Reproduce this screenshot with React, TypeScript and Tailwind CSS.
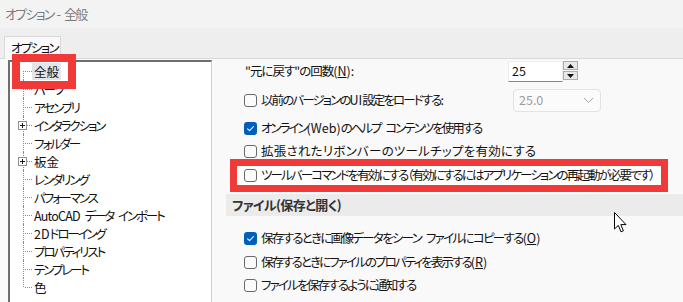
import React from "react";

const L = ({ children }: { children: React.ReactNode }) => <span className="tracking-normal">{children}</span>;
const S = () => <span className="tracking-[2px]"> </span>;

const Check = ({ checked }: { checked?: boolean }) =>
  checked ? (
    <span className="flex h-[13px] w-[13px] shrink-0 items-center justify-center rounded-[3px] bg-[#005fb8]">
      <svg width="9" height="9" viewBox="0 0 9 9">
        <path d="M1.6 4.8 L3.6 6.7 L7.5 2.5" fill="none" stroke="#fff" strokeWidth="1.1" strokeLinecap="round" strokeLinejoin="round" />
      </svg>
    </span>
  ) : (
    <span className="h-[13px] w-[13px] shrink-0 rounded-[3px] border border-[#6a6a6a] bg-[#fbfbfb]" />
  );

const items: { key: string; label: React.ReactNode; selected?: boolean; plus?: boolean; kanji?: boolean }[] = [
  { key: "a", label: "全般", selected: true, kanji: true },
  { key: "b", label: "パーツ" },
  { key: "c", label: "アセンブリ" },
  { key: "d", label: "インタラクション", plus: true },
  { key: "e", label: "フォルダー" },
  { key: "f", label: "板金", plus: true, kanji: true },
  { key: "g", label: "レンダリング" },
  { key: "h", label: "パフォーマンス" },
  {
    key: "i",
    label: (
      <>
        <span className="tracking-[-0.8px]">AutoCAD</span>
        <S />
        データ
        <S />
        インポート
      </>
    ),
  },
  {
    key: "j",
    label: (
      <>
        <L>2D</L>ドローイング
      </>
    ),
  },
  { key: "k", label: "プロパティリスト" },
  { key: "l", label: "テンプレート" },
  { key: "m", label: "色", kanji: true },
];

function TreeRow({ label, selected, plus, kanji, first, last }: { label: React.ReactNode; selected?: boolean; plus?: boolean; kanji?: boolean; first: boolean; last: boolean }) {
  const vClass = first
    ? "absolute left-[13px] top-[9px] bottom-0 border-l border-dotted border-[#8c8c8c]"
    : last
    ? "absolute left-[13px] top-0 h-[9px] border-l border-dotted border-[#8c8c8c]"
    : "absolute left-[13px] top-0 bottom-0 border-l border-dotted border-[#8c8c8c]";
  const labelClass = selected
    ? "bg-[#e5e5e5] px-[2px] leading-[17px] tracking-normal"
    : kanji
    ? "px-[2px] leading-[17px] tracking-normal"
    : "px-[2px] leading-[17px] tracking-[-2.1px]";
  return (
    <div className="flex h-[18px] items-center whitespace-pre">
      <div className="relative h-full w-[22px] shrink-0">
        <div className={vClass} />
        <div className="absolute left-[15px] right-0 top-[9px] border-t border-dotted border-[#8c8c8c]" />
        {plus && (
          <div className="absolute left-[8px] top-[5px] flex h-[9px] w-[9px] items-center justify-center border border-[#919191] bg-white">
            <svg width="7" height="7" viewBox="0 0 7 7">
              <path d="M1 3.5 H6 M3.5 1 V6" stroke="#1a1a1a" strokeWidth="1" shapeRendering="crispEdges" />
            </svg>
          </div>
        )}
      </div>
      <span className={labelClass}>{label}</span>
    </div>
  );
}

export default function App() {
  return (
    <div className="relative h-[302px] w-[683px] overflow-hidden bg-[#f9f9f9] font-['Noto_Sans_CJK_JP',sans-serif] text-[12.5px] text-[#111] [font-feature-settings:'palt']">
      {/* title bar */}
      <div className="flex h-[28px] items-center whitespace-pre bg-[#f3f3f3] pl-[5px] text-[13px] tracking-[-1.7px] text-[#7a7a7a]">
        オプション<L> - </L>全般
      </div>
      {/* tab strip */}
      <div className="flex h-[31px] items-end border-b border-[#d9d9d9] bg-[#eeeeee] pl-[4px]">
        <div className="mb-[-1px] flex h-[23px] w-[57px] items-center whitespace-nowrap border border-b-0 border-[#d9d9d9] bg-[#f9f9f9] pl-[6px] tracking-[-1.6px] text-[#111]">オプション</div>
      </div>
      {/* body */}
      <div className="flex h-[243px]">
        {/* tree */}
        <div className="w-[213px] shrink-0 pl-[8px] pt-[1px]">
          <div className="h-[250px] w-[204px] border-l-2 border-t-2 border-r border-l-[#6e6e6e] border-t-[#6e6e6e] border-r-[#cfcfcf] bg-white">
            {items.map((it, i) => (
              <TreeRow key={it.key} label={it.label} selected={it.selected} plus={it.plus} kanji={it.kanji} first={i === 0} last={i === items.length - 1} />
            ))}
          </div>
        </div>
        {/* right panel */}
        <div className="flex flex-1 flex-col whitespace-pre pl-[31px] pt-[1px] tracking-[-1.75px]">
          <div className="flex h-[22px] items-center">
            <div className="w-[264px] pl-[1px] tracking-[-1px]">
              "元に戻す"の回数<L>(<u>N</u>):</L>
            </div>
            <div className="flex h-[21px] w-[55px] items-center border border-[#ececec] border-b-[#868686] bg-white pl-[3px] tracking-normal">25</div>
            <div className="flex flex-col gap-[1px] self-start pt-[1px]">
              <div className="flex h-[9px] w-[15px] items-center justify-center border border-[#adadad] bg-[#e8e8e8]">
                <svg width="7" height="4" viewBox="0 0 7 4"><path d="M0 4 L3.5 0 L7 4 Z" fill="#111" /></svg>
              </div>
              <div className="flex h-[9px] w-[15px] items-center justify-center border border-[#adadad] bg-[#e8e8e8]">
                <svg width="7" height="4" viewBox="0 0 7 4"><path d="M0 0 L3.5 4 L7 0 Z" fill="#111" /></svg>
              </div>
            </div>
          </div>
          <div className="mt-[7px] flex h-[23px] items-center">
            <div className="flex w-[269px] items-center gap-[4px]">
              <Check />
              <span className="tracking-[-1.9px]">
                以前のバージョンの<L>UI</L>設定をロードする<L>:</L>
              </span>
            </div>
            <div className="flex h-[23px] w-[88px] items-center justify-between rounded-[4px] border border-[#e3e3e3] bg-[#fbfbfb] pl-[5px] pr-[6px] tracking-normal text-[#9d9d9d]">
              <span>25.0</span>
              <svg width="11" height="7" viewBox="0 0 11 7"><path d="M1 1 L5.5 5.5 L10 1" fill="none" stroke="#a8a8a8" strokeWidth="1" /></svg>
            </div>
          </div>
          <div className="mt-[4px] flex h-[24px] items-center gap-[4px]">
            <Check checked />
            <span className="tracking-[-2px]">
              オンライン<L>(Web)</L>のヘルプ<S />コンテンツを使用する
            </span>
          </div>
          <div className="flex h-[23px] items-center gap-[4px]">
            <Check />
            <span className="tracking-[0.25px]">拡張されたリボンバーのツールチップを有効にする</span>
          </div>
          <div className="ml-[-14px] mt-[-4px] box-border flex h-[33px] w-[438px] items-center gap-[4px] border-[7px] border-[#f03a3a] bg-white pl-[7px]">
            <Check />
            <span className="tracking-[-1.9px]">ツールバーコマンドを有効にする（有効にするにはアプリケーションの再起動が必要です）</span>
          </div>
          <div className="ml-[-18px] mt-[2px] flex h-[22px] items-center bg-[#ebebeb] pl-[6px] text-[13px] font-bold tracking-[-0.6px] text-[#333]">ファイル(保存と開く)</div>
          <div className="mt-[11px] flex h-[23px] items-center gap-[4px]">
            <Check checked />
            <span className="tracking-[-1.7px]">
              保存するときに画像データをシーン<S />ファイルにコピーする<L>(<u>O</u>)</L>
            </span>
          </div>
          <div className="flex h-[24px] items-center gap-[4px]">
            <Check />
            <span className="tracking-[-1.9px]">
              保存するときにファイルのプロパティを表示する<L>(<u>R</u>)</L>
            </span>
          </div>
          <div className="flex h-[23px] items-center gap-[4px]">
            <Check />
            <span className="tracking-[-1.8px]">ファイルを保存するように通知する</span>
          </div>
        </div>
      </div>
      {/* red annotation box around 全般 */}
      <div className="pointer-events-none absolute left-[12px] top-[54px] h-[35px] w-[64px] border-[8px] border-[#f03a3a]" />
      {/* mouse cursor */}
      <svg className="pointer-events-none absolute left-[614px] top-[212px]" width="13" height="21" viewBox="0 0 13 21">
        <path d="M0.5 0.5 L0.5 17 L4.3 13.4 L7 19.8 L9.4 18.8 L6.8 12.6 L12 12.6 Z" fill="#fff" stroke="#000" strokeWidth="1" strokeLinejoin="miter" />
      </svg>
    </div>
  );
}
